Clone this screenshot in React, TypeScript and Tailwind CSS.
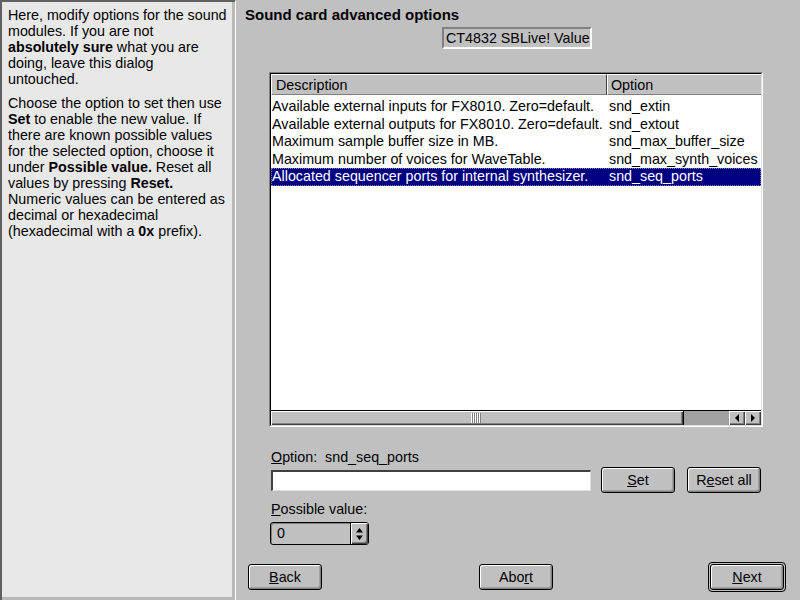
import React from "react";

const rows = [
  { desc: "Available external inputs for FX8010. Zero=default.", opt: "snd_extin" },
  { desc: "Available external outputs for FX8010. Zero=default.", opt: "snd_extout" },
  { desc: "Maximum sample buffer size in MB.", opt: "snd_max_buffer_size" },
  { desc: "Maximum number of voices for WaveTable.", opt: "snd_max_synth_voices" },
  { desc: "Allocated sequencer ports for internal synthesizer.", opt: "snd_seq_ports" },
];

const selected = 4;

const raised =
  "bg-[#c0c0c0] shadow-[inset_1px_1px_0_#fff,inset_-1px_-1px_0_#404040,inset_-2px_-2px_0_#808080]";

const Btn = ({ children, className = "" }: { children: React.ReactNode; className?: string }) => (
  <div
    className={`flex items-center justify-center h-[26px] w-[74px] rounded-[3px] border border-black bg-[#c0c0c0] shadow-[inset_1px_1px_0_#fff,inset_-1px_-1px_0_#808080,inset_-2px_-2px_0_#a0a0a0] text-[14.3px] leading-none ${className}`}
  >
    {children}
  </div>
);

const Arrow = ({ dir }: { dir: "left" | "right" }) => (
  <div className={`w-[16px] h-full flex items-center justify-center ${raised}`}>
    <svg width="6" height="8" viewBox="0 0 6 8">
      {dir === "left" ? <path d="M5 0 L1 4 L5 8 Z" fill="#000" /> : <path d="M1 0 L5 4 L1 8 Z" fill="#000" />}
    </svg>
  </div>
);

export default function App() {
  return (
    <div className="w-[800px] h-[600px] flex bg-[#c0c0c0] text-black font-['Liberation_Sans',Arial,sans-serif] overflow-hidden">
      {/* help panel */}
      <aside className="w-[235px] h-full border-l-2 border-t-2 border-[#606060] border-r-0 border-b-0 shadow-[inset_-3px_-3px_0_#b8b8b8,1px_1px_0_#fff] bg-[#e8e8e8] pl-[6px] pt-[5px] text-[14.3px] leading-[16px] whitespace-nowrap">
        <p>
          Here, modify options for the sound
          <br />
          modules. If you are not
          <br />
          <b>absolutely sure</b> what you are
          <br />
          doing, leave this dialog
          <br />
          untouched.
        </p>
        <p className="mt-[8px]">
          Choose the option to set then use
          <br />
          <b>Set</b> to enable the new value. If
          <br />
          there are known possible values
          <br />
          for the selected option, choose it
          <br />
          under <b>Possible value.</b> Reset all
          <br />
          values by pressing <b>Reset.</b>
          <br />
          Numeric values can be entered as
          <br />
          decimal or hexadecimal
          <br />
          (hexadecimal with a <b>0x</b> prefix).
        </p>
      </aside>

      {/* main */}
      <main className="flex-1 flex flex-col ml-[1px]">
        <h1 className="ml-[9px] mt-[6px] h-[18px] text-[15px] leading-[18px] font-bold">
          Sound card advanced options
        </h1>

        <div className="ml-[206px] mt-[3px] w-[150px] h-[22px] border-2 border-t-[#808080] border-l-[#808080] border-b-white border-r-white flex items-center pl-[2px] text-[14.3px] leading-none whitespace-nowrap">
          CT4832 SBLive! Value
        </div>

        {/* table */}
        <div className="ml-[33px] mt-[23px] w-[494px] h-[355px] border-t border-l border-[#808080] border-r border-b border-r-white border-b-white">
          <div className="w-full h-full border border-black border-r-[#dfdfdf] border-b-[#dfdfdf] bg-white flex flex-col text-[14.3px]">
            <div className="flex h-[21px] shrink-0 bg-[#c0c0c0]">
              <div className="w-[336px] pl-[4px] pt-[2px] flex items-center border-t border-l border-white border-r border-b border-r-[#404040] border-b-[#808080]">
                Description
              </div>
              <div className="flex-1 pl-[3px] pt-[2px] flex items-center border-t border-l border-white border-b border-b-[#808080]">
                Option
              </div>
            </div>
            <div className="flex-1 pt-[3px]">
              {rows.map((r, i) => (
                <div
                  key={r.opt}
                  className={`flex h-[17.5px] items-center whitespace-nowrap ${
                    i === selected ? "bg-[#000080] text-white outline-1 outline-dotted outline-[#8080c0] -outline-offset-1" : ""
                  }`}
                >
                  <span className="w-[337px] pl-[1px]">{r.desc}</span>
                  <span className="pl-[1px]">{r.opt}</span>
                </div>
              ))}
            </div>
            <div className="h-[15px] shrink-0 flex border-t border-black bg-[#c0c0c0]">
              <div className={`w-[412px] h-full flex items-center justify-center ${raised}`}>
                <div className="flex gap-[1px] h-[10px] ml-[-4px]">
                  {[0, 1, 2, 3, 4].map((k) => (
                    <div key={k} className="w-[1px] h-full bg-white shadow-[1px_0_0_#808080]" />
                  ))}
                </div>
              </div>
              <div className="flex-1 bg-[#a0a0a0] border-l border-black" />
              <Arrow dir="left" />
              <Arrow dir="right" />
            </div>
          </div>
        </div>

        {/* option editor */}
        <div className="ml-[35px] mt-[22px] h-[16px] text-[14.3px] leading-[16px] whitespace-nowrap">
          <span className="underline">O</span>ption:&nbsp; snd_seq_ports
        </div>
        <div className="ml-[35px] mt-[2px] h-[26px] flex items-center">
          <div className="w-[320px] h-[21px] bg-white border-t-2 border-l-2 border-t-[#404040] border-l-[#404040] border-b border-r border-b-[#e0e0e0] border-r-[#e0e0e0]" />
          <Btn className="ml-[10px]">
            <span>
              <span className="underline">S</span>et
            </span>
          </Btn>
          <Btn className="ml-[12px]">
            <span>
              R<span className="underline">e</span>set all
            </span>
          </Btn>
        </div>

        <div className="ml-[35px] mt-[8px] h-[16px] text-[14.3px] leading-[16px]">
          <span className="underline">P</span>ossible value:
        </div>
        <div className="ml-[34px] mt-[5px] w-[99px] h-[23px] rounded-[3px] border border-black flex bg-[#c0c0c0] shadow-[inset_1px_1px_0_#808080]">
          <div className="flex-1 flex items-center pl-[6px] text-[14.3px] leading-none">0</div>
          <div className={`w-[18px] h-full flex items-center justify-center border-l border-black rounded-r-[2px] ${raised}`}>
            <svg width="7" height="12" viewBox="0 0 7 12">
              <path d="M3.5 0 L7 4.5 L0 4.5 Z M3.5 12 L7 7.5 L0 7.5 Z" fill="#000" />
            </svg>
          </div>
        </div>

        {/* navigation */}
        <div className="mt-[17px] h-[30px] flex items-center">
          <Btn className="ml-[12px]">
            <span>
              <span className="underline">B</span>ack
            </span>
          </Btn>
          <Btn className="ml-[157px]">
            <span>
              Abo<span className="underline">r</span>t
            </span>
          </Btn>
          <div className="ml-[155px] w-[78px] h-[30px] rounded-[4px] border border-black flex items-center justify-center">
            <Btn className="w-[70px] h-[23px]">
              <span>
                <span className="underline">N</span>ext
              </span>
            </Btn>
          </div>
        </div>
      </main>
    </div>
  );
}
